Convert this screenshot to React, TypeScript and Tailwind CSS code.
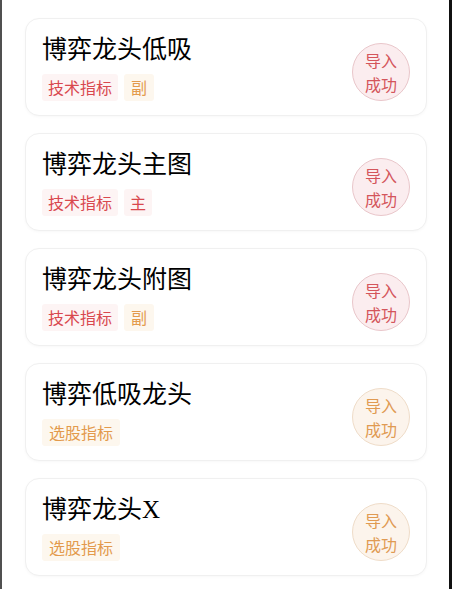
import React from "react";

type Tone = "red" | "orange";
type Item = { title: string; tags: { text: string; tone: Tone }[]; tone: Tone };

const items: Item[] = [
  { title: "博弈龙头低吸", tags: [{ text: "技术指标", tone: "red" }, { text: "副", tone: "orange" }], tone: "red" },
  { title: "博弈龙头主图", tags: [{ text: "技术指标", tone: "red" }, { text: "主", tone: "red" }], tone: "red" },
  { title: "博弈龙头附图", tags: [{ text: "技术指标", tone: "red" }, { text: "副", tone: "orange" }], tone: "red" },
  { title: "博弈低吸龙头", tags: [{ text: "选股指标", tone: "orange" }], tone: "orange" },
  { title: "博弈龙头X", tags: [{ text: "选股指标", tone: "orange" }], tone: "orange" },
];

function Tag({ text, tone }: { text: string; tone: Tone }) {
  return (
    <span
      className={
        tone === "red"
          ? "px-[6px] h-[27px] flex items-center rounded-[3px] bg-[#fdf4f4] text-[#d9484e] text-[16px]"
          : "px-[7px] h-[27px] flex items-center rounded-[3px] bg-[#fdf7ee] text-[#e39a4c] text-[16px]"
      }
    >
      {text}
    </span>
  );
}

function Badge({ tone }: { tone: Tone }) {
  return (
    <div
      className={
        tone === "red"
          ? "mt-[9px] w-[58px] h-[58px] rounded-full border border-[#e9c6ca] bg-[#fbedef] text-[#d4555b] flex flex-col items-center justify-center text-[16px] leading-[24px]"
          : "mt-[9px] w-[58px] h-[58px] rounded-full border border-[#efdcc8] bg-[#fcf4ec] text-[#e09a52] flex flex-col items-center justify-center text-[16px] leading-[24px]"
      }
    >
      <span>导入</span>
      <span>成功</span>
    </div>
  );
}

export default function App() {
  return (
    <div
      className="w-[452px] h-[589px] overflow-hidden bg-white flex"
      style={{ fontFamily: '"Noto Sans CJK SC", "Noto Sans", sans-serif' }}
    >
      <div className="w-[2px] h-full bg-[#505050]" />
      <div className="flex-1 flex flex-col gap-[17px] pt-[18px] pl-[23px] pr-[22px]">
        {items.map((it, i) => (
          <div
            key={i}
            className="h-[98px] shrink-0 rounded-[14px] border border-[#f0f0f0] bg-white flex items-center justify-between pl-[16px] pr-[16px] shadow-[0_1px_3px_rgba(0,0,0,0.03)]"
          >
            <div className="flex flex-col">
              <div
                className="text-[25px] leading-[32px] text-black"
                style={{ fontFamily: '"Liberation Serif", "Noto Sans CJK SC", serif' }}
              >
                {it.title}
              </div>
              <div className="flex gap-[6px] mt-[8px]">
                {it.tags.map((t, j) => (
                  <Tag key={j} text={t.text} tone={t.tone} />
                ))}
              </div>
            </div>
            <Badge tone={it.tone} />
          </div>
        ))}
      </div>
      <div className="w-[3px] h-full bg-[#111]" />
    </div>
  );
}
